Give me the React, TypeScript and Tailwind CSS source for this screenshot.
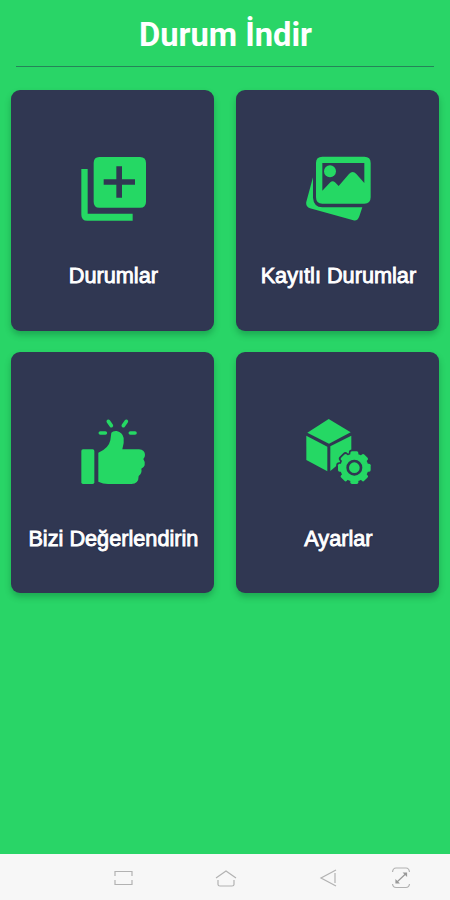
import type { ReactNode } from "react";

function AddIcon() {
  return (
    <svg className="size-[66px]" viewBox="30 30 198 198" fill="#25d864">
      <path fillRule="evenodd" d="M88 36H210Q228 36 228 54V170Q228 188 210 188H88Q71 188 71 170V54Q71 36 88 36ZM139 64V103H101V119H139V158H156V119H195V103H156V64Z" />
      <path d="M34 72H53V206H188V227H52Q34 227 34 209Z" />
    </svg>
  );
}

function GalleryIcon() {
  return (
    <svg className="size-[66px]" viewBox="30 30 198 198" fill="#25d864">
      <path fillRule="evenodd" d="M82 35H208Q227 35 227 54V157Q227 176 208 176H82Q63 176 63 157V54Q63 35 82 35ZM82 54V137L106 112Q113 105 120 112L131 123L162 87Q173 75 184 87L208 114V54Z" />
      <circle cx="105" cy="79" r="18" />
      <path d="M54 97V158Q56 186 82 187H202L193 214Q188 229 175 226L45 190Q31 185 34 170Z" />
    </svg>
  );
}

function ThumbIcon() {
  return (
    <svg className="size-[66px] overflow-visible" viewBox="30 21 198 198" fill="#25d864">
      <rect x="34" y="118" width="39" height="104" rx="5" />
      <path d="M85 128Q116 116 121 91L124 68Q129 62 140 63Q158 67 161 84Q163 99 157 118H207Q225 120 225 135Q225 142 220 147Q227 157 224 166Q221 174 214 176Q217 189 206 198Q206 222 184 222H114Q99 222 85 215Z" />
      <path d="M91 69H106M181 69H195M115 34L124 47M169 34L160 47" fill="none" stroke="#25d864" strokeWidth="11" strokeLinecap="round" />
    </svg>
  );
}

const teeth = [0, 45, 90, 135, 180, 225, 270, 315];

function SettingsIcon() {
  return (
    <svg className="size-[66px] overflow-visible" viewBox="30 21 198 198" fill="#25d864">
      <path d="M101 27L167 67L102 101L37 68Z" />
      <path d="M34 77L97 110V184L34 150Z" />
      <path d="M106 109L169 77V130L106 183Z" />
      <g fill="#303752" stroke="#303752" strokeWidth="13">
        <circle cx="178" cy="173" r="40" />
        {teeth.map((a) => (
          <rect key={a} x="168" y="125" width="20" height="22" rx="3" transform={`rotate(${a} 178 173)`} />
        ))}
      </g>
      <circle cx="178" cy="173" r="42" />
      {teeth.map((a) => (
        <rect key={a} x="166" y="124" width="24" height="24" rx="5" transform={`rotate(${a} 178 173)`} />
      ))}
      <circle cx="178" cy="173" r="20" fill="none" stroke="#303752" strokeWidth="8" />
    </svg>
  );
}

function Card({ icon, label, gap = "mt-[42px]" }: { icon: ReactNode; label: string; gap?: string }) {
  return (
    <button className="flex h-[241px] flex-col items-center rounded-[9px] bg-[#303752] pt-[65px] shadow-[0_4px_6px_rgba(0,70,35,0.3)]">
      {icon}
      <span className={`${gap} whitespace-nowrap pl-px text-[21.7px] leading-[26px] text-white [-webkit-text-stroke:0.9px_white] [text-shadow:0_0_2px_#11143f]`}>
        {label}
      </span>
    </button>
  );
}

export default function App() {
  return (
    <div className="flex h-[900px] w-[450px] flex-col overflow-hidden bg-[#29d567] font-['Liberation_Sans',Arial,sans-serif]">
      <header className="mx-4 h-[67px] border-b border-[#258459] pt-[15px] text-center">
        <h1 className="pl-px font-[Roboto,sans-serif] text-[32.7px] leading-[40px] font-bold text-white">Durum İndir</h1>
      </header>
      <main className="grid grid-cols-[203px_203px] gap-x-[22px] gap-y-[21.4px] pt-[22.5px] pl-[11.4px]">
        <Card icon={<AddIcon />} label="Durumlar" />
        <Card icon={<GalleryIcon />} label="Kayıtlı Durumlar" />
        <Card icon={<ThumbIcon />} label="Bizi Değerlendirin" gap="mt-[43px]" />
        <Card icon={<SettingsIcon />} label="Ayarlar" gap="mt-[43px]" />
      </main>
      <nav className="mt-auto flex h-[46px] items-center bg-[#f7f7f7] pt-[2px] pl-[113px]">
        <svg className="h-[24px] w-[20px]" viewBox="0 0 20 24" fill="none" stroke="#b2b2b2" strokeWidth="1.2">
          <path d="M2 10V5.500H19V10M2 14V18.500H19V14" />
        </svg>
        <svg className="ml-[82px] h-[24px] w-[22px]" viewBox="0 0 22 24" fill="none" stroke="#b2b2b2" strokeWidth="1.2">
          <path d="M1 12L11 5L21 12M3 14V18.500Q3 20 5 20H17Q19 20 19 18.500V14" />
        </svg>
        <svg className="ml-[82px] h-[24px] w-[18px]" viewBox="0 0 18 24" fill="none" stroke="#b2b2b2" strokeWidth="1.2">
          <path d="M17 4L2 12L17 20M16 7V17" />
        </svg>
        <svg className="ml-[54px] h-[24px] w-[20px]" viewBox="0 0 20 24" fill="none" stroke="#b2b2b2" strokeWidth="1.2">
          <path d="M1.500 6Q2 2 5 2H15Q18 2 18.500 6M1.500 18Q2 21.500 5 21.500H15Q18 21.500 18.500 18" />
          <path d="M5.500 16.500L15 7.500" stroke="#999" />
          <path d="M13 7H15.500V9.500L13 7ZM7.500 17H5V14.500L7.500 17Z" stroke="#999" fill="#999" />
        </svg>
      </nav>
    </div>
  );
}
